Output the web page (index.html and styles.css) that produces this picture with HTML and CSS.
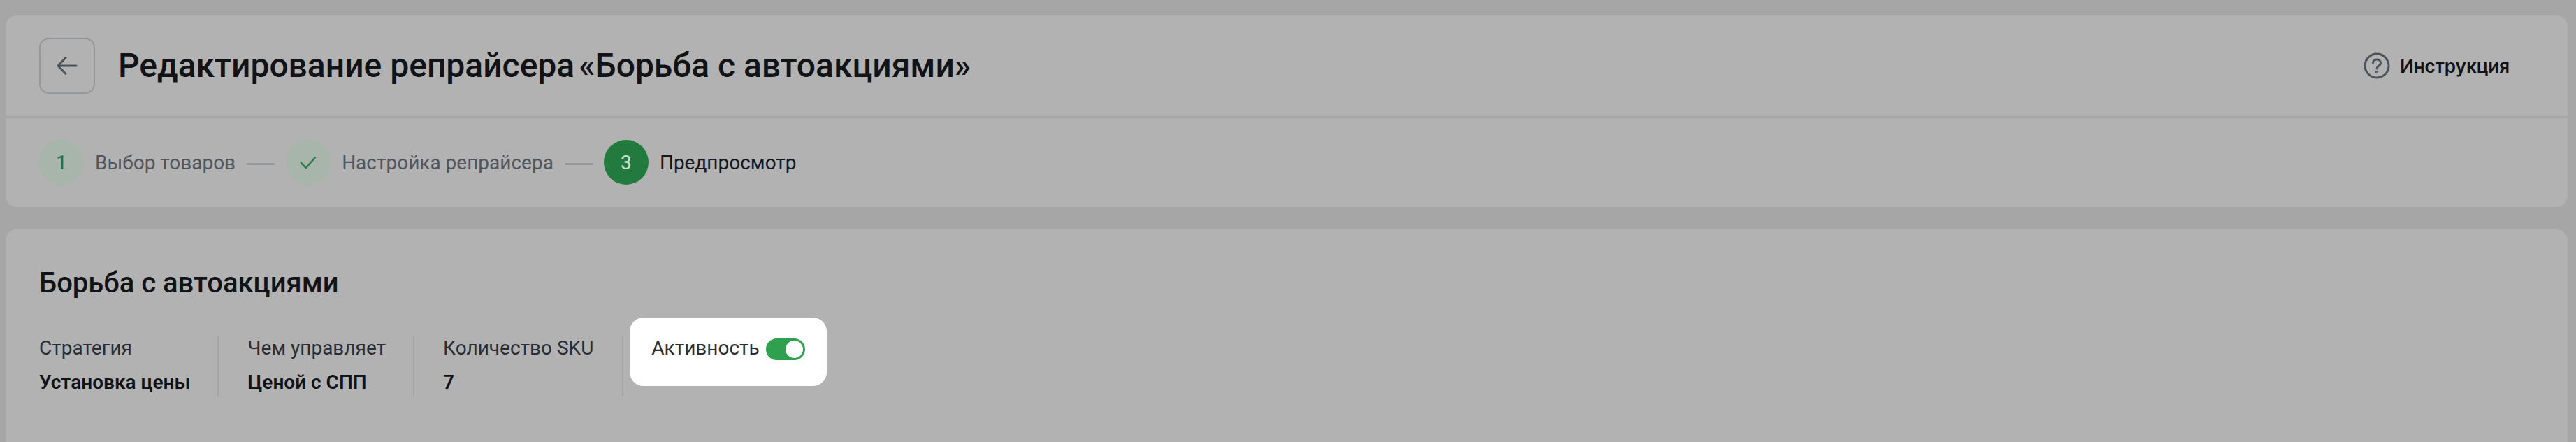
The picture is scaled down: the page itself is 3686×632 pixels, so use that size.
FILE: index.html
```html
<!DOCTYPE html>
<html lang="ru">
<head>
  <meta charset="UTF-8" />
  <title>Редактирование репрайсера</title>
  <link rel="stylesheet" href="styles.css">
</head>
<body>
  <section class="card head-card">
    <header class="page-head">
      <button class="back-btn" aria-label="Назад">
        <svg width="32" height="32" viewBox="0 0 32 32" fill="none" stroke="#4c525a" stroke-width="3" stroke-linecap="round" stroke-linejoin="round">
          <path d="M29 16H3M14 4.500L3 16l11 11.500" />
        </svg>
      </button>
      <h1>Редактирование репрайсера<span class="title-name">«Борьба с автоакциями»</span></h1>
      <a class="help-link">
        <svg width="38" height="38" viewBox="0 0 38 38" fill="none" stroke="#4c525a" stroke-width="3" stroke-linecap="round">
          <circle cx="19" cy="19" r="17" />
          <path d="M13.500 15c0-3 2.500-5 5.500-5s5.500 2 5.500 5c0 4-5.500 4-5.500 8" />
          <circle cx="19" cy="28" r="0.800" fill="#4c525a" />
        </svg>
        Инструкция
      </a>
    </header>
    <ol class="steps">
      <li class="step">
        <span class="step-num">1</span>
        <span class="step-name">Выбор товаров</span>
      </li>
      <li class="step-line"></li>
      <li class="step">
        <span class="step-num">
          <svg width="24" height="20" viewBox="0 0 24 20" fill="none" stroke="#2f7a47" stroke-width="2.500" stroke-linecap="round" stroke-linejoin="round">
            <path d="M2 11l7 7L22 3" />
          </svg>
        </span>
        <span class="step-name">Настройка репрайсера</span>
      </li>
      <li class="step-line"></li>
      <li class="step step-current">
        <span class="step-num">3</span>
        <span class="step-name">Предпросмотр</span>
      </li>
    </ol>
  </section>

  <section class="card info-card">
    <h2>Борьба с автоакциями</h2>
    <div class="stats">
      <div class="stat">
        <div class="stat-label">Стратегия</div>
        <div class="stat-value">Установка цены</div>
      </div>
      <div class="stat">
        <div class="stat-label">Чем управляет</div>
        <div class="stat-value">Ценой с СПП</div>
      </div>
      <div class="stat">
        <div class="stat-label">Количество SKU</div>
        <div class="stat-value">7</div>
      </div>
      <div class="active-box">
        <span class="stat-label">Активность</span>
        <span class="toggle"><span class="toggle-knob"></span></span>
      </div>
    </div>
  </section>
</body>
</html>
```

FILE: styles.css
```css
* {
  box-sizing: border-box;
}

html, body {
  height: 100%;
}

body {
  margin: 0;
  padding: 22px 12px 0 8px;
  background-color: #a6a6a6;
  color: #111317;
  font-family: 'Roboto', 'Liberation Sans', sans-serif;
  overflow: hidden;
}

.card {
  background-color: #b2b2b2;
  border-radius: 16px;
}

.head-card {
  height: 274px;
  margin-bottom: 32px;
}

.page-head {
  height: 147px;
  padding: 32px 83px 0 48px;
  display: flex;
  align-items: flex-start;
  border-bottom: 3px solid #a5a5a5;
}

.back-btn {
  width: 80px;
  height: 80px;
  padding: 0;
  flex: none;
  display: flex;
  align-items: center;
  justify-content: center;
  background: none;
  border: 2px solid #94979b;
  border-radius: 14px;
}

h1 {
  margin: 0 0 0 33px;
  flex-grow: 1;
  font-size: 48px;
  line-height: 80px;
  font-weight: 500;
}

.title-name {
  margin-left: 6px;
}

.help-link {
  height: 80px;
  display: flex;
  align-items: center;
  gap: 14px;
  font-family: 'Inter', sans-serif;
  font-size: 26px;
  font-weight: 600;
}

.steps {
  list-style: none;
  margin: 0;
  padding: 31px 48px 0;
  display: flex;
  align-items: center;
}

.step {
  display: flex;
  align-items: center;
  gap: 16px;
}

.step-num {
  width: 64px;
  height: 64px;
  display: flex;
  align-items: center;
  justify-content: center;
  border-radius: 50%;
  background-color: #a8b5aa;
  color: #23713c;
  font-size: 28px;
}

.step-name {
  color: #50565e;
  font-size: 28px;
}

.step-line {
  width: 40px;
  height: 3px;
  margin: 4px 16px 0 16px;
  background-color: #979a9d;
}

.step-current .step-num {
  background-color: #237a3f;
  color: #cfe0d3;
}

.step-current .step-name {
  color: #14171c;
}

.info-card {
  height: 304px;
  padding: 53px 48px 0;
  border-radius: 16px 16px 0 0;
}

h2 {
  margin: 0 0 51px;
  font-size: 40px;
  line-height: 48px;
  font-weight: 500;
}

.stats {
  display: flex;
  align-items: flex-start;
}

.stat {
  height: 87px;
  padding-right: 39px;
  margin-right: 41px;
  border-right: 2px solid #a2a4a6;
}

.stat:nth-child(3) {
  padding-right: 41px;
  margin-right: 9px;
}

.stat-label {
  color: #2a2e34;
  font-size: 28px;
  line-height: 36px;
}

.stat-value {
  margin-top: 13px;
  font-size: 28px;
  line-height: 36px;
  font-weight: 600;
}

.active-box {
  width: 282px;
  height: 98px;
  margin-top: -26px;
  padding: 26px 0 0 31px;
  display: flex;
  align-items: flex-start;
  gap: 9px;
  background-color: #fff;
  border-radius: 20px;
}

.toggle {
  width: 56px;
  height: 31px;
  margin-top: 4px;
  padding: 3px;
  display: flex;
  justify-content: flex-end;
  background-color: #2fa050;
  border-radius: 16px;
}

.toggle-knob {
  width: 25px;
  height: 25px;
  background-color: #fff;
  border-radius: 50%;
}
```
